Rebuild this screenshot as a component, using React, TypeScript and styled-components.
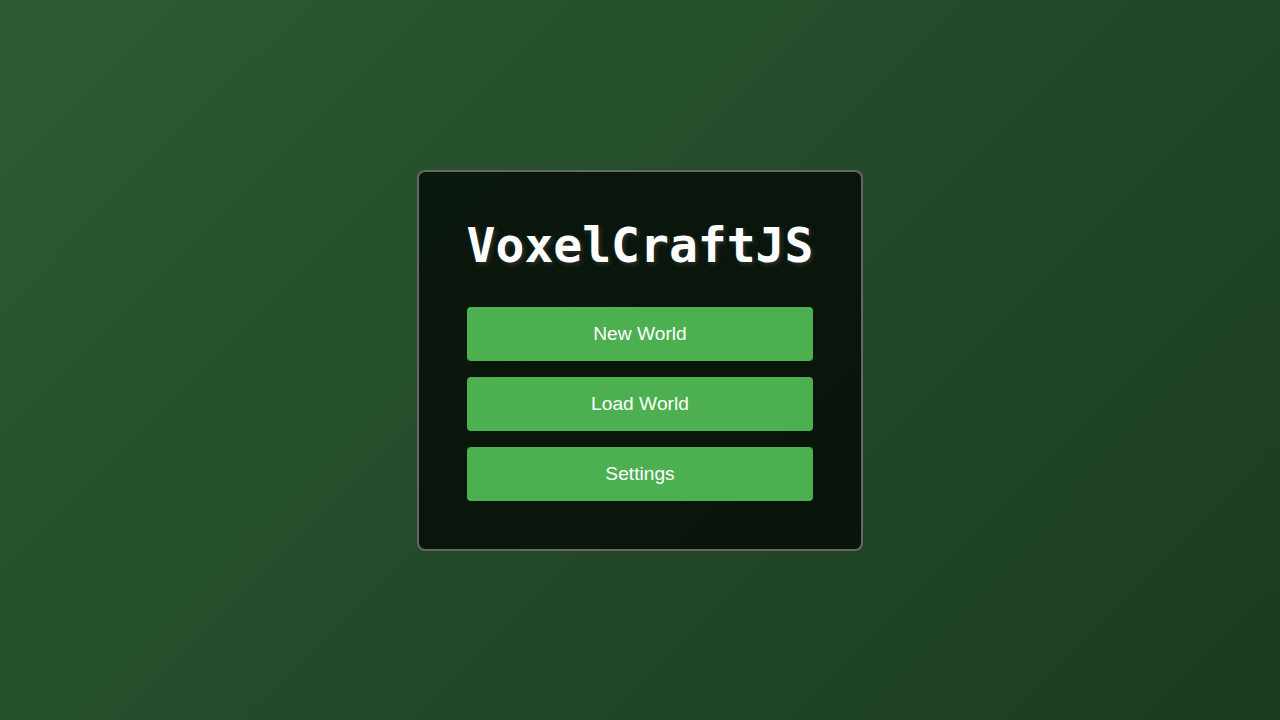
import React from "react";
import styled, { createGlobalStyle } from "styled-components";

const GlobalStyle = createGlobalStyle`
  html, body {
    margin: 0;
    padding: 0;
    width: 100%;
    height: 100%;
  }
  body {
    font-family: "Liberation Sans", Arial, sans-serif;
    overflow: hidden;
  }
`;

const Screen = styled.div`
  width: 1280px;
  height: 720px;
  display: flex;
  align-items: center;
  justify-content: center;
  background: linear-gradient(135deg, #2d5a33 0%, #1a3c1f 100%);
`;

const Panel = styled.div`
  background: rgba(0, 0, 0, 0.7);
  border: 2px solid #666;
  border-radius: 8px;
  padding: 48px;
  display: flex;
  flex-direction: column;
  box-sizing: border-box;
`;

const Title = styled.h1`
  margin: 1px 0 38px;
  font-family: "DejaVu Sans Mono", monospace;
  font-weight: bold;
  font-size: 48px;
  line-height: 1;
  color: #fff;
  text-align: center;
  text-shadow: 2px 2px 4px rgba(80, 80, 80, 0.5);
`;

const ButtonList = styled.div`
  display: flex;
  flex-direction: column;
  gap: 16px;
`;

const MenuButton = styled.button`
  display: block;
  width: 100%;
  padding: 16px;
  border: none;
  border-radius: 4px;
  background: #4caf50;
  color: #fff;
  font-family: "Liberation Sans", Arial, sans-serif;
  font-size: 19.2px;
  cursor: pointer;
`;

export default function App() {
  return (
    <>
      <GlobalStyle />
      <Screen>
        <Panel>
          <Title>VoxelCraftJS</Title>
          <ButtonList>
            <MenuButton>New World</MenuButton>
            <MenuButton>Load World</MenuButton>
            <MenuButton>Settings</MenuButton>
          </ButtonList>
        </Panel>
      </Screen>
    </>
  );
}
